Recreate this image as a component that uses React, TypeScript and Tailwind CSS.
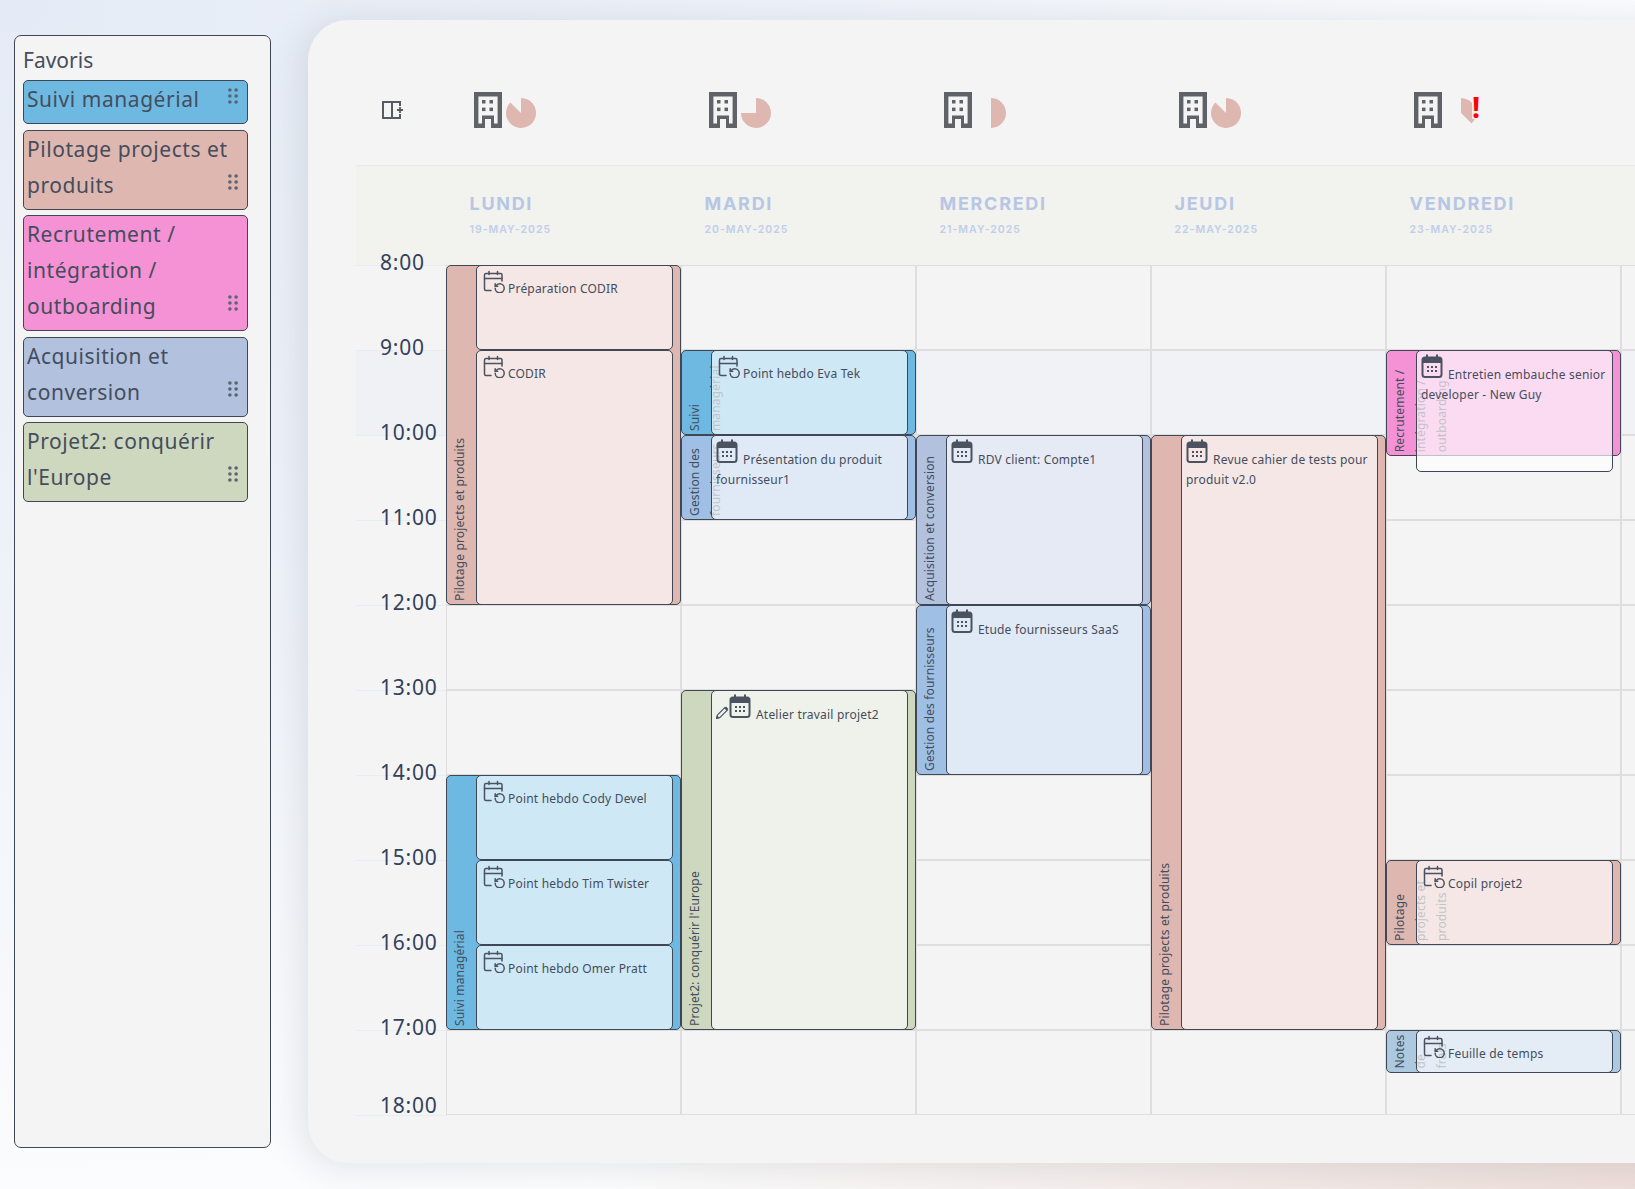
import React from "react";

const stroke = "#4b5260";

function Recur() {
  return (
    <svg viewBox="0 0 24 24" className="inline-block align-baseline w-[24px] h-[24px] mr-[3px]" fill="none" stroke={stroke} strokeWidth="1.5" strokeLinecap="round" strokeLinejoin="round">
      <path d="M10 21.5H5A1.5 1.5 0 0 1 3.5 20V6A1.5 1.5 0 0 1 5 4.5H19.5A1.5 1.5 0 0 1 21 6V12" />
      <path d="M3.5 9.5H21M8 2.5V5.5M16.5 2.5V5.5" />
      <g transform="translate(12.7 13.3) scale(0.5)" strokeWidth="3">
        <path d="M3 12a9 9 0 1 0 9-9 9.75 9.75 0 0 0-6.74 2.74L3 8" />
        <path d="M3 3v5h5" />
      </g>
    </svg>
  );
}

function Cal() {
  return (
    <svg viewBox="0 0 24 25" className="inline-block align-baseline w-[24px] h-[25px] mr-[3px]" fill="none">
      <rect x="1.5" y="3.5" width="19" height="19.5" rx="2.5" stroke={stroke} strokeWidth="2" />
      <path d="M1.5 5.5A2 2 0 0 1 3.5 3.5H18.5A2 2 0 0 1 20.5 5.5V9H1.5Z" fill={stroke} />
      <path d="M6 0.5V4M16 0.5V4" stroke={stroke} strokeWidth="2" />
      <g fill={stroke}>
        <rect x="6" y="12" width="2" height="2" />
        <rect x="10" y="12" width="2" height="2" />
        <rect x="14" y="12" width="2" height="2" />
        <rect x="6" y="16" width="2" height="2" />
        <rect x="10" y="16" width="2" height="2" />
        <rect x="14" y="16" width="2" height="2" />
      </g>
    </svg>
  );
}

function Pencil() {
  return (
    <svg viewBox="0 0 13 13" className="inline-block align-baseline w-[13px] h-[13px]" fill="none">
      <path d="M0.5 12.5L1.3 9.2L8.8 1.7L11.3 4.2L3.8 11.7Z" stroke={stroke} strokeWidth="1.2" strokeLinejoin="round" />
      <path d="M8.3 2.2L10 0.6L12.4 3L10.8 4.7Z" fill={stroke} />
      <path d="M0.5 12.5L1.3 9.5L3.5 11.7Z" fill={stroke} />
    </svg>
  );
}

function Building() {
  return (
    <svg viewBox="0 0 28 36" className="w-[28px] h-[36px] shrink-0">
      <path fillRule="evenodd" fill="#5f6368" d="M0 0H28V36H17V27H11V36H0ZM4.4 4.4V31.6H8V23.5H20V31.6H23.6V4.4Z" />
      <rect x="8" y="8" width="3.5" height="3.5" fill="#5f6368" />
      <rect x="15.5" y="8" width="3.5" height="3.5" fill="#5f6368" />
      <rect x="8" y="15.6" width="3.5" height="3.5" fill="#5f6368" />
      <rect x="15.5" y="15.6" width="3.5" height="3.5" fill="#5f6368" />
    </svg>
  );
}

function Pie({ frac }: { frac: number }) {
  const a = frac * 2 * Math.PI;
  const x = 15 + 15 * Math.sin(a);
  const y = 15 - 15 * Math.cos(a);
  return (
    <svg viewBox="0 0 30 30" className="w-[30px] h-[30px] shrink-0">
      <path d={`M15 15V0A15 15 0 ${frac > 0.5 ? 1 : 0} 1 ${x} ${y}Z`} fill="#deb7b0" />
    </svg>
  );
}

function Grip() {
  return (
    <svg viewBox="0 0 10 16" className="absolute right-[9px] bottom-[19px] w-[10px] h-[16px]" fill="#5b6472">
      <circle cx="1.9" cy="2" r="1.8" />
      <circle cx="8.1" cy="2" r="1.8" />
      <circle cx="1.9" cy="8" r="1.8" />
      <circle cx="8.1" cy="8" r="1.8" />
      <circle cx="1.9" cy="14" r="1.8" />
      <circle cx="8.1" cy="14" r="1.8" />
    </svg>
  );
}

const favorites = [
  { label: "Suivi managérial", bg: "bg-[#6db9e2]" },
  { label: "Pilotage projects et produits", bg: "bg-[#deb7b0]" },
  { label: "Recrutement / intégration / outboarding", bg: "bg-[#f492d5]" },
  { label: "Acquisition et conversion", bg: "bg-[#b1c1de]" },
  { label: "Projet2: conquérir l'Europe", bg: "bg-[#cdd8bf]" },
];

type Ev = { title: string; icon: "recur" | "cal" | "edit"; h: string };
type Group = { label: string; bg: string; start: number; span: number; events: Ev[] };

const SUIVI = "bg-[#6db9e2]";
const PILOT = "bg-[#deb7b0]";
const RECR = "bg-[#f492d5]";
const ACQ = "bg-[#b1c1de]";
const PROJ = "bg-[#cdd8bf]";
const GEST = "bg-[#9fc0e4]";
const NOTE = "bg-[#adc9e0]";

const days: { name: string; date: string; frac: number; alert?: boolean; groups: Group[] }[] = [
  {
    name: "LUNDI",
    date: "19-MAY-2025",
    frac: 0.875,
    groups: [
      {
        label: "Pilotage projects et produits",
        bg: PILOT,
        start: 0,
        span: 16,
        events: [
          { title: "Préparation CODIR", icon: "recur", h: "h-[85px]" },
          { title: "CODIR", icon: "recur", h: "h-[255px]" },
        ],
      },
      {
        label: "Suivi managérial",
        bg: SUIVI,
        start: 24,
        span: 12,
        events: [
          { title: "Point hebdo Cody Devel", icon: "recur", h: "h-[85px]" },
          { title: "Point hebdo Tim Twister", icon: "recur", h: "h-[85px]" },
          { title: "Point hebdo Omer Pratt", icon: "recur", h: "h-[85px]" },
        ],
      },
    ],
  },
  {
    name: "MARDI",
    date: "20-MAY-2025",
    frac: 0.75,
    groups: [
      { label: "Suivi managérial", bg: SUIVI, start: 4, span: 4, events: [{ title: "Point hebdo Eva Tek", icon: "recur", h: "h-[85px]" }] },
      {
        label: "Gestion des fournisseurs",
        bg: GEST,
        start: 8,
        span: 4,
        events: [{ title: "Présentation du produit fournisseur1", icon: "cal", h: "h-[85px]" }],
      },
      { label: "Projet2: conquérir l'Europe", bg: PROJ, start: 20, span: 16, events: [{ title: "Atelier travail projet2", icon: "edit", h: "h-[340px]" }] },
    ],
  },
  {
    name: "MERCREDI",
    date: "21-MAY-2025",
    frac: 0.5,
    groups: [
      { label: "Acquisition et conversion", bg: ACQ, start: 8, span: 8, events: [{ title: "RDV client: Compte1", icon: "cal", h: "h-[170px]" }] },
      { label: "Gestion des fournisseurs", bg: GEST, start: 16, span: 8, events: [{ title: "Etude fournisseurs SaaS", icon: "cal", h: "h-[170px]" }] },
    ],
  },
  {
    name: "JEUDI",
    date: "22-MAY-2025",
    frac: 0.875,
    groups: [
      {
        label: "Pilotage projects et produits",
        bg: PILOT,
        start: 8,
        span: 28,
        events: [{ title: "Revue cahier de tests pour produit v2.0", icon: "cal", h: "h-[595px]" }],
      },
    ],
  },
  {
    name: "VENDREDI",
    date: "23-MAY-2025",
    frac: 0.375,
    alert: true,
    groups: [
      {
        label: "Recrutement / intégration / outboarding",
        bg: RECR,
        start: 4,
        span: 5,
        events: [{ title: "Entretien embauche senior developer - New Guy", icon: "cal", h: "h-[122px]" }],
      },
      { label: "Pilotage projects et produits", bg: PILOT, start: 28, span: 4, events: [{ title: "Copil projet2", icon: "recur", h: "h-[85px]" }] },
      { label: "Notes de frais", bg: NOTE, start: 36, span: 2, events: [{ title: "Feuille de temps", icon: "recur", h: "h-[42.5px]" }] },
    ],
  },
];

const hours = ["8:00", "9:00", "10:00", "11:00", "12:00", "13:00", "14:00", "15:00", "16:00", "17:00"];
const rowIndexes = [0, 1, 2, 3, 4, 5, 6, 7, 8, 9];

function EventCard({ ev }: { ev: Ev }) {
  return (
    <div className={`relative ${ev.h} shrink-0 rounded-[5px] border border-[#3f4654] bg-[#ffffffaa] pl-[4px] pr-[6px] pt-[3px] text-[12px] leading-[20px] tracking-[0.2px] text-[#454d5c]`}>
      {ev.icon === "recur" && <Recur />}
      {ev.icon === "cal" && <Cal />}
      {ev.icon === "edit" && (
        <>
          <Pencil />
          <Cal />
        </>
      )}
      {ev.title}
    </div>
  );
}

function GroupBlock({ g }: { g: Group }) {
  const textHeight = g.span * 21.25 - 8;
  return (
    <div
      className={`col-start-1 flex rounded-[5px] border border-[#3f4654] ${g.bg} min-w-0`}
      style={{ gridRow: `${g.start + 1} / span ${g.span}` }}
    >
      <div className="flex w-[29px] shrink-0 items-start pl-[1.5px] pt-[3px]">
        <div
          className="shrink-0 rotate-180 text-[12px] leading-[21px] tracking-[0.15px] text-[#454d5c] [writing-mode:vertical-rl]"
          style={{ height: textHeight }}
        >
          {g.label}
        </div>
      </div>
      <div className="-my-px flex w-[196.5px] shrink-0 flex-col">
        {g.events.map((ev) => (
          <EventCard key={ev.title} ev={ev} />
        ))}
      </div>
    </div>
  );
}

export default function App() {
  return (
    <div className="flex h-[1189px] overflow-hidden bg-[radial-gradient(ellipse_at_100%_100%,#eedfdb_0%,#eedfdb00_45%),radial-gradient(ellipse_at_0%_0%,#e5ebf6_0%,#eef2f9_35%,#fcfdfe_75%)] font-['Noto_Sans',sans-serif]">
      {/* Sidebar */}
      <aside className="ml-[14px] mt-[35px] h-[1113px] w-[257px] shrink-0 rounded-[7px] border border-[#3f4654] bg-[#f4f4f4] pl-[8px] pr-[22px] pt-[8px]">
        <div className="h-[36px] text-[21px] leading-[32px] text-[#454d5c]">Favoris</div>
        <div className="flex flex-col gap-[5.5px]">
          {favorites.map((f) => (
            <div key={f.label} className={`relative rounded-[5px] border border-[#3f4654] ${f.bg} px-[3px] pb-[6px] text-[21px] leading-[36px] tracking-[0.55px] text-[#454d5c]`}>
              {f.label}
              <Grip />
            </div>
          ))}
        </div>
      </aside>

      {/* Main card */}
      <main className="ml-[37px] mt-[20px] h-[1143px] w-[1400px] shrink-0 rounded-[40px] bg-[#f4f4f4] pl-[48px] shadow-[-6px_4px_36px_rgba(40,50,60,0.12)]">
        {/* Capacity row */}
        <div className="grid h-[145px] grid-cols-[90px_repeat(6,235px)] pt-[72px]">
          <div className="pl-[26px] pt-[9px]">
            <svg viewBox="0 0 21 18" className="h-[18px] w-[21px]" fill="none" stroke="#555b63" strokeWidth="2">
              <path d="M18 5V1H1V17H18V13M10 1V17" />
              <path d="M15 9H21M18 6V12" strokeWidth="1.8" />
            </svg>
          </div>
          {days.map((d) => (
            <div key={d.name} className="relative flex h-[36px] items-end gap-[4px] pl-[27.5px]">
              <Building />
              <Pie frac={d.frac} />
              {d.alert && (
                <span className="absolute left-[86px] top-[3px] h-[24px] w-[8px] bg-[#f4f4f4cc] text-center text-[29px] font-bold leading-[24px] text-[#ff0000]">!</span>
              )}
            </div>
          ))}
        </div>

        {/* Day headings */}
        <div className="grid h-[100px] grid-cols-[90px_repeat(6,235px)] border-t border-[#e9e9ec] bg-[#f2f2ef]">
          <div />
          {days.map((d) => (
            <div key={d.name} className="pl-[23.5px] pt-[28px] font-['Inter',sans-serif]">
              <div className="text-[18px] font-bold leading-[20px] tracking-[1.7px] text-[#b6c6e4]">{d.name}</div>
              <div className="mt-[9px] text-[10.5px] font-semibold leading-[14px] tracking-[1px] text-[#c0cfe9]">{d.date}</div>
            </div>
          ))}
          <div />
        </div>

        {/* Hours grid */}
        <div className="grid grid-cols-[90px_repeat(6,235px)]">
          <div>
            {hours.map((h, i) => (
              <div key={h} className={`h-[85px] border-t border-[#e8edf3] pl-[24px] text-[21px] leading-[24px] tracking-[0.8px] text-[#33415a] ${i === 1 ? "bg-[#f0f1f4]" : ""}`}>
                <div className="-translate-y-[16px]">{h}</div>
              </div>
            ))}
            <div className="h-0 border-t border-[#e8edf3] pl-[24px] text-[21px] leading-[24px] tracking-[0.8px] text-[#33415a]">
              <div className="-translate-y-[23px]">18:00</div>
            </div>
          </div>
          {days.map((d) => (
            <div key={d.name} className="grid grid-cols-1 grid-rows-[repeat(40,21.25px)]">
              {rowIndexes.map((r) => (
                <div
                  key={r}
                  className={`col-start-1 border border-[#dedede] ${r === 1 ? "bg-[#f1f2f5]" : ""}`}
                  style={{ gridRow: `${r * 4 + 1} / span 4` }}
                />
              ))}
              {d.groups.map((g) => (
                <GroupBlock key={g.label + g.start} g={g} />
              ))}
            </div>
          ))}
          <div className="grid grid-cols-1 grid-rows-[repeat(40,21.25px)]">
            {rowIndexes.map((r) => (
              <div
                key={r}
                className={`col-start-1 border border-[#dedede] ${r === 1 ? "bg-[#f1f2f5]" : ""}`}
                style={{ gridRow: `${r * 4 + 1} / span 4` }}
              />
            ))}
          </div>
        </div>
      </main>
    </div>
  );
}
